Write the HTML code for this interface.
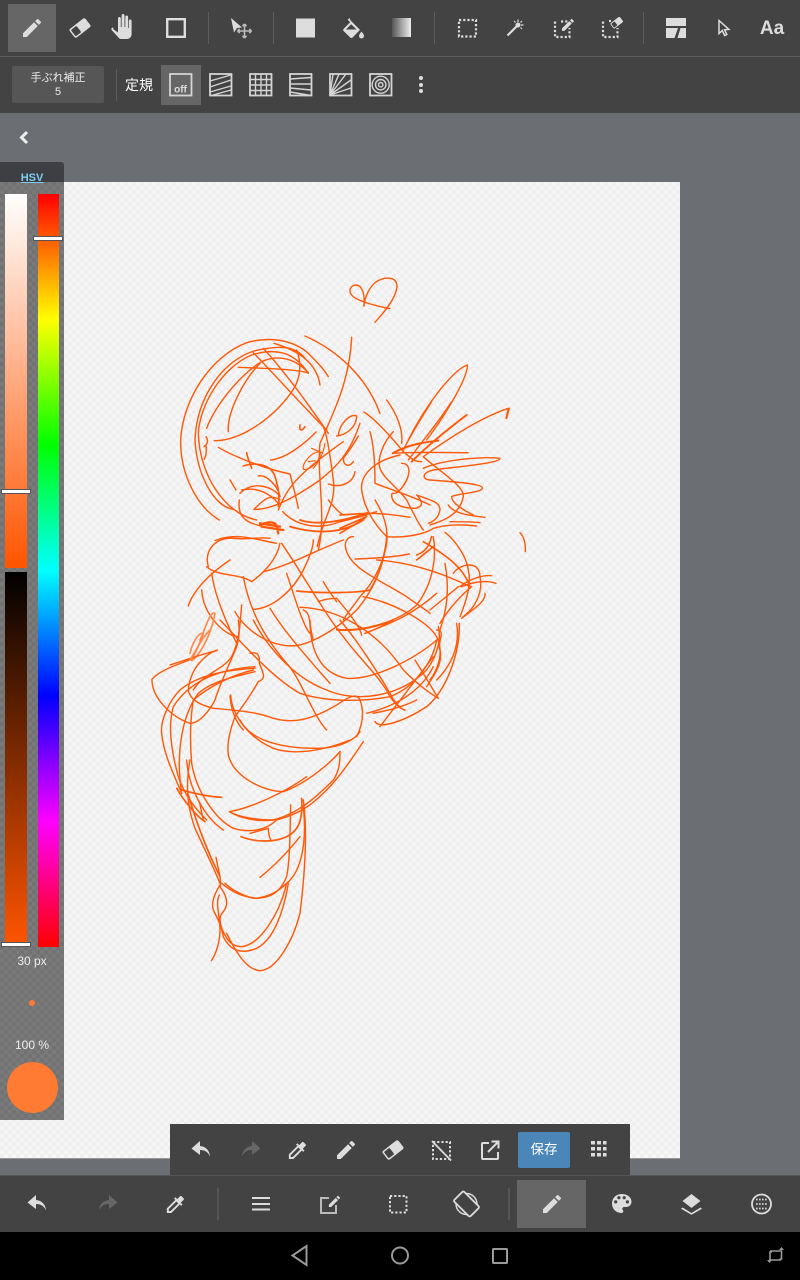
<!DOCTYPE html>
<html lang="ja"><head><meta charset="utf-8"><title>MediBang Paint</title>
<style>
html,body{margin:0;padding:0;background:#000}
#a{position:relative;width:800px;height:1280px;overflow:hidden;background:#6b6e73;font-family:"Liberation Sans","Noto Sans CJK JP",sans-serif}
#a div{position:absolute}
.chk{background-color:#f3f3f3;background-image:conic-gradient(#eeeeee 25%,#f6f6f6 0 50%,#eeeeee 0 75%,#f6f6f6 0);background-size:8px 8px}
svg{position:absolute;left:0;top:0}
.t{color:#eee;text-align:center;white-space:nowrap}
</style></head><body><div id="a">
<div class="chk" style="left:0;top:182px;width:680px;height:977px;border-bottom:1px solid #999;box-sizing:border-box"></div>

<svg width="800" height="1280" viewBox="0 0 800 1280" fill="none" stroke="#ff5a0a" stroke-width="1.5" stroke-linecap="round" stroke-linejoin="round">
<g transform="translate(140 270) scale(.3333)" stroke-width="4.2">
<path d="M705 157C725 135 770 85 771 48C770 20 735 18 708 36C692 48 675 75 672 108"/>
<path d="M750 116C710 108 660 95 640 80C622 65 630 45 650 45C668 48 675 75 672 108"/>
<path d="M805 510C860 400 940 300 982 285C985 320 920 430 860 510"/>
<path d="M1108 415L1100 445"/>
</g>
<g transform="translate(180 330) scale(.3333)" stroke-width="4.3">
<path d="M118 570C50 530 0 430 2 330C8 210 90 80 200 38C270 18 340 30 385 70C410 95 430 115 445 140"/>
<path d="M160 538C100 530 50 430 45 330C50 200 130 90 225 62C280 50 340 40 375 85"/>
<path d="M230 570C130 550 58 430 55 310C60 220 130 110 215 75C280 55 340 60 385 130"/>
<path d="M80 295C100 240 170 140 245 95C300 70 350 90 385 128"/>
<path d="M175 112C240 115 320 115 385 128"/>
<path d="M220 68C280 130 380 240 440 300"/>
<path d="M250 55C310 120 390 230 445 310"/>
<path d="M282 40C350 60 410 95 420 165"/>
<path d="M145 305C140 250 190 150 240 100M103 332C180 335 290 260 345 170C362 135 365 100 350 60"/>
<path d="M375 18C470 60 560 140 600 250M515 22C510 140 470 230 420 340C410 440 440 560 415 660"/>
<path d="M430 290C440 310 450 370 460 450C470 520 430 560 412 650"/>
<path d="M78 320C85 330 85 340 72 350M78 345C80 365 78 380 72 388"/>
<path d="M360 285C357 302 365 305 375 290" stroke-width="5"/>
<path d="M272 390C320 385 375 340 408 306M115 352C170 385 270 420 330 432C340 470 350 510 355 535"/>
<path d="M370 418C365 400 395 365 420 365C425 385 395 422 370 418ZM385 395L405 392M395 355L425 368M435 340C430 370 420 390 400 415" stroke-width="3.5"/>
<path d="M200 368C205 395 215 410 215 415M190 408C230 395 275 405 285 440C295 470 300 500 295 530" stroke-width="5"/>
<path d="M235 438C260 432 295 470 300 500M150 450L168 480"/>
<path d="M180 490C220 450 280 470 300 500M185 480C230 470 270 490 295 520M178 510C170 570 210 580 250 590"/>
<path d="M222 538C250 510 270 490 300 510M222 538C260 540 320 520 420 450C470 410 510 370 540 280M295 540C320 480 340 440 490 335"/>
<path d="M105 632C170 605 230 630 290 640"/>
<path d="M240 585C300 560 290 600 295 610M245 590L310 600M240 580L300 590" stroke-width="7"/>
<path d="M308 545C350 590 420 600 480 575C520 565 555 555 590 545"/>
<path d="M360 570C420 590 500 570 565 548M330 590C400 610 480 615 550 570" stroke-width="5.5"/>
<path d="M475 315C480 280 510 250 530 258C530 290 500 315 470 318"/>
<path d="M535 318C520 345 505 365 490 385C490 405 505 415 520 395" stroke-width="4.5"/>
<path d="M445 462C480 475 520 460 525 425M445 510C460 530 480 550 490 555"/>
</g>
<g transform="translate(340 400) scale(.3333)" stroke-width="4.3">
<path d="M72 36C110 60 170 130 190 155C215 175 220 185 245 185"/>
<path d="M140 0C170 40 190 90 185 130M275 5C240 60 210 110 190 150M335 5C300 60 250 120 205 180"/>
<path d="M380 45C340 75 270 130 215 185" stroke-width="6"/>
<path d="M505 25C430 50 340 105 250 170M505 25L498 55"/>
<path d="M160 160C220 155 320 158 385 158" stroke-width="4"/>
<path d="M158 160C210 130 270 125 295 122" stroke-width="6"/>
<path d="M250 205C320 175 440 170 480 175C480 190 350 200 280 210C240 220 250 240 270 240C330 245 430 250 428 265C420 280 350 280 335 290C335 310 370 330 400 345"/>
<path d="M250 170C300 215 375 260 370 290C360 340 320 360 270 375"/>
<path d="M160 95C130 125 110 180 120 205C130 235 170 260 200 300C220 340 240 380 250 390"/>
<path d="M185 190C220 190 210 240 175 275C165 285 155 275 155 285C155 310 180 325 225 325C255 320 245 300 230 285C270 300 300 305 300 330C295 355 280 365 265 370"/>
<path d="M90 95C100 130 105 190 105 250C140 265 210 285 270 315"/>
<path d="M180 165C110 180 60 220 65 270C75 340 120 390 140 410C200 415 260 400 280 385C330 370 380 375 410 378"/>
<path d="M325 315C340 340 380 345 435 352M330 365C370 365 400 365 420 368"/>
<path d="M105 300C130 340 145 380 140 430C130 490 100 550 60 590C40 620 20 640 10 660"/>
<path d="M40 410C20 410 10 430 20 455C40 510 120 540 200 590C240 620 260 630 270 640"/>
<path d="M315 397C345 420 380 470 385 510C395 550 380 600 360 650"/>
<path d="M540 398C552 410 557 430 556 455"/>
<path d="M0 345L80 340M0 365L80 345M0 385L80 350M0 400L75 355" stroke-width="5"/>
<path d="M80 340C120 340 170 345 210 352"/>
</g>
<g transform="translate(170 530) scale(.3333)" stroke-width="4.3">
<path d="M55 228C70 180 120 130 180 90M115 110C100 60 140 20 190 25C230 30 270 20 300 25"/>
<path d="M110 110C140 140 210 130 245 155C280 130 320 90 330 40M280 125C350 110 440 60 520 30"/>
<path d="M95 180C100 260 170 320 205 320M125 130C135 200 170 280 200 340"/>
<path d="M215 225C210 280 210 330 185 380C160 420 100 430 70 480"/>
<path d="M195 245C230 310 320 360 390 345C450 330 520 280 560 240C620 170 650 80 650 10"/>
<path d="M220 140C240 250 290 330 350 400C390 440 430 560 470 600"/>
<path d="M335 40C390 120 470 260 520 320C580 400 630 440 660 500C680 530 700 540 705 540"/>
<path d="M350 130C370 190 400 290 420 310M300 235C340 300 400 370 480 460"/>
<path d="M250 238C310 235 370 180 400 120C420 80 430 50 430 30"/>
<path d="M380 183C450 190 560 190 600 180C620 150 640 100 650 30" stroke-width="5"/>
<path d="M445 215C470 205 490 205 500 205M460 155C470 175 490 200 500 215"/>
<path d="M555 87C610 85 680 80 718 72M620 90C700 95 800 120 900 170"/>
<path d="M390 232C500 235 620 300 700 420C740 460 780 490 805 505"/>
<path d="M400 240C425 250 415 280 430 330"/>
<path d="M500 298C570 305 680 280 740 225C790 160 800 80 790 20"/>
<path d="M585 310C660 280 720 260 800 190M575 315C570 290 530 240 500 205"/>
<path d="M580 200C660 215 770 270 800 320C820 360 810 410 780 450"/>
<path d="M740 90L790 50M740 75C780 60 780 30 785 20M760 35C820 70 880 110 900 170" stroke-width="5"/>
<path d="M850 130C870 100 930 90 930 140C940 180 920 230 880 260M780 240L865 170M810 280C840 230 880 190 905 170"/>
<path d="M875 170C910 155 950 150 978 160M870 170C900 145 940 135 965 137M945 190C950 215 900 245 875 265M860 280C870 340 850 400 800 450"/>
<path d="M800 300C830 300 800 340 810 360C820 400 790 440 770 470"/>
<path d="M825 100C840 180 830 240 810 300"/>
<path d="M610 550C660 540 700 530 740 510"/>
<path d="M60 370C65 345 85 305 100 310C90 340 70 380 65 392C80 385 120 330 135 250C120 240 105 300 90 330" stroke="#ff8a4d" stroke-width="5"/>
<path d="M0 405C50 390 100 370 140 362"/>
<path d="M180 498C185 560 210 590 220 600"/>
</g>
<g transform="translate(140 620) scale(.3333)" stroke-width="4.3">
<path d="M148 120C110 135 60 150 36 178C35 230 90 290 150 310C180 310 210 270 225 240C240 190 270 130 290 80C300 50 298 20 295 0"/>
<path d="M232 90C190 105 150 150 145 210C150 240 180 255 220 265C280 270 350 275 400 295C470 315 530 290 590 255C620 235 650 215 660 240C675 280 665 320 650 350"/>
<path d="M330 100C350 95 360 100 358 130C370 160 380 175 355 185C330 230 300 270 285 290C270 330 260 370 265 405C280 470 370 515 430 515C500 490 570 430 600 395"/>
<path d="M345 145C270 150 180 160 120 210C90 240 60 300 65 340C70 400 100 460 125 520"/>
<path d="M345 140C270 145 160 165 100 260C85 310 90 380 115 470C135 530 170 570 200 600"/>
<path d="M345 155C290 170 220 180 175 220C130 280 105 390 125 520"/>
<path d="M340 150C280 165 220 190 160 240C150 300 150 370 155 430C170 520 230 600 280 625C330 640 380 630 410 600C480 580 510 560 560 510C600 470 640 410 670 365"/>
<path d="M272 225C275 280 320 350 400 385C470 410 570 385 630 360"/>
<path d="M300 300C330 360 420 385 530 385C590 385 640 365 660 335"/>
<path d="M600 395C600 420 600 450 580 480C540 520 480 580 400 600C350 600 290 590 268 575C330 565 430 520 500 470"/>
<path d="M270 575C290 590 350 610 410 598"/>
<path d="M140 420C145 500 190 590 250 630"/>
<path d="M150 420C135 500 145 570 165 625C190 680 220 740 240 790"/>
<path d="M145 525C170 610 200 690 240 770M110 505C130 540 170 590 195 605M125 510C160 520 200 530 245 532" stroke-width="5"/>
<path d="M178 545L190 600M228 712C235 750 245 780 240 800"/>
<path d="M303 650C340 665 400 670 440 650C470 635 490 610 485 535" stroke-width="5"/>
<path d="M385 625C385 640 388 650 392 660M385 625L330 640"/>
<path d="M452 555C450 640 450 720 440 770C420 820 390 835 340 835C300 825 270 805 255 790"/>
<path d="M360 772C400 740 440 700 480 650M490 560C500 650 490 750 440 790C410 820 380 830 350 835C310 830 280 820 245 790"/>
<path d="M490 540C505 650 490 800 480 880C460 960 410 1050 360 1052C320 1050 290 1000 260 940"/>
<path d="M240 795C225 820 210 850 222 875C235 900 245 920 250 950C270 990 300 1005 350 985C400 960 430 880 445 790"/>
<path d="M238 825C225 850 240 885 240 930C240 960 230 1000 214 1022"/>
<path d="M240 800C255 820 270 850 250 875C235 890 240 905 245 925C260 960 275 980 305 980C360 975 420 880 440 790"/>
<path d="M240 0C290 50 390 170 480 220C540 240 640 250 750 230C830 200 880 120 890 60"/>
<path d="M340 0C370 60 450 170 560 210C650 250 780 230 860 150C890 110 905 60 895 20"/>
<path d="M600 0C650 60 710 150 750 220C770 260 790 270 795 270M510 0C510 90 540 160 620 175C700 180 820 120 890 60"/>
<path d="M705 305C720 330 800 300 860 260C920 210 960 100 958 10" stroke-width="4.6"/>
<path d="M825 120C850 160 880 210 895 235M720 320L880 110M590 30C650 35 720 20 760 0M675 40C700 30 730 20 750 5" stroke-width="4.3"/>
<path d="M680 280C760 260 840 220 880 140"/>
<path d="M150 120C180 70 190 50 210 30" stroke="#ff8a4d" stroke-width="5"/>
</g>
</svg>

<!-- left colour panel -->
<div class="chk" style="left:0;top:182px;width:64px;height:938px;background-color:#777;background-image:conic-gradient(#727272 25%,#7a7a7a 0 50%,#727272 0 75%,#7a7a7a 0);background-size:8px 8px"></div>
<div style="left:0;top:162px;width:64px;height:20px;background:#3d3f42;border-radius:0 3px 0 0"></div>
<div style="left:0;top:172px;width:64px;text-align:center;font-size:11px;line-height:13px;font-weight:bold;color:#7fcdf2;text-decoration:underline">HSV</div>
<div style="left:5px;top:194px;width:22px;height:374px;background:linear-gradient(#fff,#ff5500)"></div>
<div style="left:5px;top:572px;width:22px;height:374px;background:linear-gradient(#000,#ff5500)"></div>
<div style="left:38px;top:194px;width:21px;height:753px;background:linear-gradient(#f00 0%,#ff0 16.67%,#0f0 33.33%,#0ff 50%,#00f 66.67%,#f0f 83.33%,#f00 100%)"></div>
<div style="left:34px;top:237px;width:28px;height:3px;background:#fff;outline:1px solid #555"></div>
<div style="left:2px;top:490px;width:28px;height:3px;background:#fff;outline:1px solid #555"></div>
<div style="left:2px;top:943px;width:28px;height:3px;background:#fff;outline:1px solid #555"></div>
<div class="t" style="left:0;width:64px;top:954px;font-size:12px">30 px</div>
<div style="left:29px;top:1000px;width:6px;height:6px;border-radius:50%;background:#ff7a33"></div>
<div class="t" style="left:0;width:64px;top:1038px;font-size:12px">100 %</div>
<div style="left:7px;top:1062px;width:51px;height:51px;border-radius:50%;background:#ff7a33"></div>

<!-- bars -->
<div style="left:0;top:0;width:800px;height:113px;background:#434343"></div>
<div style="left:0;top:56px;width:800px;height:1px;background:#5c5c5c"></div>
<div style="left:170px;top:1124px;width:460px;height:51px;background:#434343"></div>
<div style="left:0;top:1175px;width:800px;height:57px;background:#434343;border-top:1px solid #555;box-sizing:border-box"></div>
<div style="left:0;top:1232px;width:800px;height:48px;background:#000"></div>
<div style="left:8px;top:4px;width:48px;height:48px;background:#666"></div>
<div style="left:161px;top:65px;width:40px;height:40px;background:#666"></div>
<div style="left:517px;top:1180px;width:69px;height:48px;background:#666"></div>
<div style="left:12px;top:66px;width:92px;height:37px;background:#565656;border-radius:2px"></div>
<div class="t" style="left:12px;width:92px;top:71px;font-size:11px;line-height:14px">手ぶれ補正<br>5</div>
<div class="t" style="left:125px;top:76px;font-size:14px;line-height:18px;color:#fff">定規</div>
<div style="left:518px;top:1132px;width:52px;height:36px;background:#4a86b8;border-radius:2px"></div>
<div class="t" style="left:518px;width:52px;top:1141px;font-size:13.5px;line-height:18px;color:#fff">保存</div>
<div class="t" style="left:757px;width:30px;top:18px;font-size:19px;line-height:22px;font-weight:bold;color:#ddd">Aa</div>

<svg width="800" height="1280" viewBox="0 0 800 1280" fill="none">
<defs>
<path id="pen" fill="#ddd" d="M3 17.25V21h3.75L17.81 9.94l-3.75-3.75L3 17.25zM20.71 7.04c.39-.39.39-1.02 0-1.41l-2.34-2.34c-.39-.39-1.02-.39-1.41 0l-1.83 1.83 3.75 3.75 1.83-1.83z"/>
<g id="undo"><path fill="#ddd" d="M10 8V3L1.500 10.500 10 17v-5c5 0 8 2 10 6.500-.5-6-4-10-10-10.500z"/></g>
<g id="redo"><path fill="#666" d="M14 8V3l8.500 7.500L14 17v-5c-5 0-8 2-10 6.500.5-6 4-10 10-10.500z"/></g>
<g id="drop"><path fill="#ddd" d="M20.700 5.600l-2.300-2.300c-.4-.4-1-.4-1.400 0l-3.100 3.100-1.900-1.900-1.400 1.400 1.400 1.400L3 16.200V21h4.800l8.900-8.900 1.400 1.400 1.400-1.400-1.900-1.900 3.100-3.100c.4-.4.4-1 0-1.500zM7 19l-2 0 0-2 8-8 2 2-8 8z"/></g>
<g id="era"><g transform="rotate(-38 12 12)"><rect x="2" y="6.500" width="20" height="11" rx="2" fill="#ddd"/><rect x="3.500" y="8" width="7" height="8" rx="1" fill="#434343"/></g></g>
<linearGradient id="gr"><stop offset="0" stop-color="#555"/><stop offset="1" stop-color="#eee"/></linearGradient>
</defs>

<!-- top row -->
<use href="#pen" transform="translate(20 16)"/>
<use href="#era" transform="translate(68 16)"/>
<path fill="#ddd" d="M113 29l5 3.500v-14c0-2 2.800-2 2.800 0V27h.8V15.500c0-2 2.900-2 2.900 0V27h.8V17c0-2 2.800-2 2.800 0v11h.7v-7c0-2 2.800-2 2.800 0v13c0 3-2 5-5 5h-5c-2 0-3-1-4-2.500l-6-6.500c-1-1.500 1-3 2.200-2z"/>
<rect x="167.200" y="19.200" width="17.600" height="17.600" stroke="#ddd" stroke-width="2.400"/>
<rect x="208" y="12" width="1" height="32" fill="#5c5c5c"/>
<path fill="#ddd" d="M231 18l11 9.500-5 .5-3 4.500z"/>
<path d="M244.500 24v14M237.500 31h14M244.500 24l-2 2.200m2-2.200l2 2.200M244.500 38l-2-2.200m2 2.200l2-2.200M237.500 31l2.200-2m-2.200 2l2.200 2M251.500 31l-2.200-2m2.200 2l-2.200 2" stroke="#bbb" stroke-width="1.600"/>
<rect x="273" y="12" width="1" height="32" fill="#5c5c5c"/>
<rect x="296" y="18.500" width="19" height="19" fill="#ddd"/>
<path fill="#ddd" d="M349.500 18l-1.800 1.800 2.500 2.500-6.500 6.400c-.7.700-.7 1.700 0 2.400l6.500 6.400c.7.700 1.700.7 2.400 0l7.400-7.600-9.500-9.500zm1.700 6.200l5.300 5.300h-10.600z"/>
<path fill="#ddd" d="M361.500 31.500c-1.500 2-2.500 3-2.500 4.500a2.500 2.500 0 0 0 5 0c0-1.500-1-2.500-2.500-4.500z"/>
<rect x="392" y="18" width="19" height="19" fill="url(#gr)"/>
<rect x="434" y="12" width="1" height="32" fill="#5c5c5c"/>
<rect x="459" y="20" width="17" height="16.500" stroke="#ddd" stroke-width="2.200" stroke-dasharray="2.200 2"/>
<path d="M507.500 35.500L517 26" stroke="#ddd" stroke-width="2.200"/>
<circle cx="518" cy="25" r="2.500" fill="#ddd"/>
<path d="M518 19.500v2.500M523.500 25H521M514 21l1.500 1.500M522 21l-1.500 1.500M522 29l-1.500-1.500" stroke="#ddd" stroke-width="1.200"/>
<path d="M561 21.500h7M555 21.500v15.500h14.500v-9" stroke="#ddd" stroke-width="2.200" stroke-dasharray="2.200 2"/>
<use href="#pen" transform="translate(560 17) scale(.66)"/>
<path d="M609 21h2M603 21.500v15.500h14.500v-9" stroke="#ddd" stroke-width="2.200" stroke-dasharray="2.200 2"/>
<use href="#era" transform="translate(609.500 15.500) scale(.6)"/>
<rect x="643" y="12" width="1" height="32" fill="#5c5c5c"/>
<path fill="#ddd" d="M666 18h20v8h-20zM666 28h12l-3.500 10H666zM680.500 28H686v10h-8.500z"/>
<path d="M719 20.500v13l3.300-3 2.300 5 2.200-1-2.200-4.700 4.300-.4z" stroke="#ddd" stroke-width="1.500"/>

<!-- second row -->
<rect x="116" y="69" width="1" height="32" fill="#5c5c5c"/>
<g stroke="#d4d4d4" stroke-width="1.400">
<rect x="170" y="74" width="21.500" height="21.500" stroke-width="1.800"/>
<rect x="210" y="74" width="21.500" height="21.500" stroke-width="1.800"/>
<path d="M210 81l21-6M210 87l21-7M210 92l21-6M213 95l18-5"/>
<rect x="250" y="74" width="21.500" height="21.500" stroke-width="1.800"/>
<path d="M255.500 74v21M261 74v21M266.500 74v21M250 79.500h21M250 85h21M250 90.500h21"/>
<rect x="290" y="74" width="21.500" height="21.500" stroke-width="1.800"/>
<path d="M290 79l21-1.500M290 84l21 0M290 88l21 2M290 92l21 3.500"/>
<rect x="330" y="74" width="21.500" height="21.500" stroke-width="1.800"/>
<path d="M330 95L339 74M330 95L346 74M330 95L351 80M330 95L351 88M330 95L333 74"/>
<rect x="370" y="74" width="21.500" height="21.500" stroke-width="1.800"/>
<circle cx="380.700" cy="84.700" r="8.500"/><circle cx="380.700" cy="84.700" r="5.200"/><circle cx="380.700" cy="84.700" r="2.200"/>
</g>
<text x="180.500" y="92.500" font-family="Liberation Sans,sans-serif" font-size="10" font-weight="bold" fill="#ddd" text-anchor="middle">off</text>
<circle cx="421" cy="78" r="2" fill="#ddd"/><circle cx="421" cy="85" r="2" fill="#ddd"/><circle cx="421" cy="91" r="2" fill="#ddd"/>

<!-- back -->
<path d="M27 132l-5.500 5.500 5.500 5.500" stroke="#eee" stroke-width="3"/>

<!-- floating bar -->
<rect x="170" y="1175" width="460" height="1" fill="#555"/>
<use href="#undo" transform="translate(190 1138)"/>
<use href="#redo" transform="translate(238 1138)"/>
<use href="#drop" transform="translate(286 1139) scale(.95)"/>
<use href="#pen" transform="translate(334 1138)"/>
<use href="#era" transform="translate(381 1138)"/>
<rect x="433" y="1142" width="17" height="17" stroke="#ddd" stroke-width="2" stroke-dasharray="2.200 2"/>
<path d="M432 1141l19 19.500" stroke="#ddd" stroke-width="1.800"/>
<path d="M489 1143h-6a1 1 0 0 0-1 1v14a1 1 0 0 0 1 1h14a1 1 0 0 0 1-1v-6M488 1152l10-10M491.500 1141.500h7v7" stroke="#ddd" stroke-width="2"/>
<g fill="#ddd"><rect x="591" y="1141" width="4" height="3.500"/><rect x="597" y="1141" width="4" height="3.500"/><rect x="603" y="1141" width="3.500" height="3.500"/><rect x="591" y="1147" width="4" height="3.500"/><rect x="597" y="1147" width="4" height="3.500"/><rect x="603" y="1147" width="3.500" height="3.500"/><rect x="591" y="1153" width="4" height="3.500"/><rect x="597" y="1153" width="4" height="3.500"/><rect x="603" y="1153" width="3.500" height="3.500"/></g>

<!-- bottom bar -->
<use href="#undo" transform="translate(26 1192)"/>
<use href="#redo" transform="translate(95 1192)"/>
<use href="#drop" transform="translate(164 1193) scale(.95)"/>
<rect x="217" y="1188" width="2" height="32" fill="#555"/>
<path d="M252 1198h18M252 1204h18M252 1209.500h18" stroke="#ddd" stroke-width="2"/>
<path d="M329 1198h-8v15h15v-8" stroke="#bbb" stroke-width="2"/>
<use href="#pen" transform="translate(327 1194) scale(.62)"/>
<rect x="390" y="1196" width="16.500" height="16.500" stroke="#ddd" stroke-width="2" stroke-dasharray="2.200 2"/>
<circle cx="466.500" cy="1204" r="10.500" stroke="#ddd" stroke-width="1.400"/>
<rect x="459.500" y="1192.500" width="14" height="23" rx="1.500" transform="rotate(-45 466.500 1204)" fill="#434343" stroke="#ddd" stroke-width="1.800"/>
<rect x="508" y="1188" width="2" height="32" fill="#555"/>
<use href="#pen" transform="translate(540 1192)"/>
<path fill="#ddd" fill-rule="evenodd" d="M621.500 1194c-5.500 0-9.500 4.200-9.500 9.500s4 9.500 9.500 9.500c1 0 1.800-.8 1.800-1.800 0-.5-.2-.9-.5-1.200-.3-.3-.5-.7-.5-1.200 0-1 .8-1.800 1.800-1.800h2.200c3 0 5.200-2.300 5.200-5.200 0-4.700-4.300-7.800-10-7.800zm-5.800 9.500a1.600 1.600 0 1 1 0-3.200 1.600 1.600 0 0 1 0 3.200zm3.200-4.200a1.600 1.600 0 1 1 0-3.200 1.600 1.600 0 0 1 0 3.200zm5.300 0a1.600 1.600 0 1 1 0-3.200 1.600 1.600 0 0 1 0 3.200zm3.200 4.200a1.600 1.600 0 1 1 0-3.200 1.600 1.600 0 0 1 0 3.200z"/>
<path fill="#ddd" d="M691.500 1194l-9 7 9 7 9-7zM682.500 1207.500l-1.500 1.200 10.500 6 10.500-6-1.500-1.200-9 5.500z"/>
<circle cx="761.500" cy="1204" r="9.500" stroke="#ddd" stroke-width="1.800"/>
<path d="M756 1199.500h11M756 1204h11M756 1208.500h11" stroke="#ccc" stroke-width="1.800" stroke-dasharray="1.700 1.300"/>

<!-- nav -->
<g stroke="#999" stroke-width="2">
<path d="M292.500 1255.500l14-9.500v19z"/>
<circle cx="400" cy="1255.500" r="8"/>
<rect x="493" y="1249" width="14" height="14" rx=".5"/>
<path d="M770 1251h11.500v8h-2M781 1260h-11v-8h2" stroke-width="1.600"/>
</g>
<path d="M781.500 1247l2.500 3h-5zM769.500 1263l-2.500-3h5z" fill="#999"/>
</svg>
</div></body></html>
